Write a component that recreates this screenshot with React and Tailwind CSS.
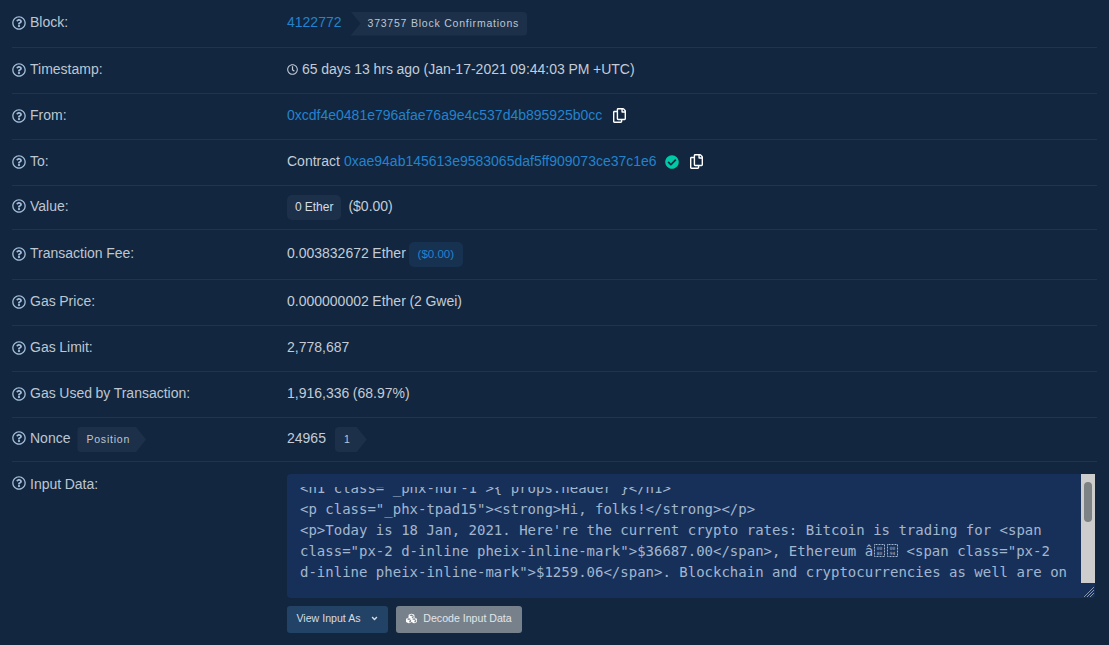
import { FaRegQuestionCircle, FaRegClock, FaRegCopy, FaCheckCircle, FaCubes, FaAngleDown } from 'react-icons/fa';

function Row({ label, extra, className, children }) {
  return (
    <div className={`flex border-b border-[#1c3557] ${className}`}>
      <div className="w-[275px] shrink-0 flex items-center text-[#bcc7d3]">
        <FaRegQuestionCircle className="w-[14px] h-[14px] mr-[4px] text-[#a3bdd8]" />
        <span>{label}</span>
        {extra}
      </div>
      <div className="flex items-center text-[#c3ccd7]">{children}</div>
    </div>
  );
}

function Copy() {
  return <FaRegCopy className="w-[13px] h-[15px] text-white" />;
}

// the two control characters show up as missing-glyph boxes in the reference
function Tofu({ top, bottom }) {
  return (
    <svg className="inline-block w-[12.5px] h-[15px] align-[-2px]" viewBox="0 0 25 30">
      <rect x="3" y="3" width="20" height="24" fill="none" stroke="#a2b7cf" strokeWidth="2" strokeDasharray="2 1" />
      <text x="13" y="13" textAnchor="middle" fontSize="9" fill="#a2b7cf" fontFamily="DejaVu Sans Mono">{top}</text>
      <text x="13" y="24" textAnchor="middle" fontSize="9" fill="#a2b7cf" fontFamily="DejaVu Sans Mono">{bottom}</text>
    </svg>
  );
}

export default function App() {
  return (
    <div className="h-[645px] overflow-hidden bg-[#12263f] px-[12px] text-[14px] leading-[21px] [word-spacing:-0.3px]" style={{ fontFamily: '"Liberation Sans", Arial, sans-serif' }}>
      <Row label="Block:" className="h-[48px] pb-[2px]">
        <a className="text-[#2383cd]">4122772</a>
        <span className="ml-[9px] mt-[2px] h-[24px] flex items-center pl-[17px] pr-[8px] bg-[#1c3049] rounded-r-[4px] text-[10.5px] tracking-[0.78px] [word-spacing:normal] text-[#bcc7d3] [clip-path:polygon(0_0,100%_0,100%_100%,0_100%,10px_50%)]">373757 Block Confirmations</span>
      </Row>
      <Row label="Timestamp:" className="h-[46px] pb-[2px]">
        <FaRegClock className="w-[11px] h-[11px] mr-[4px]" />
        65 days 13 hrs ago (Jan-17-2021 09:44:03 PM +UTC)
      </Row>
      <Row label="From:" className="h-[46px] pb-[2px]">
        <a className="text-[#2383cd] mr-[11px]">0xcdf4e0481e796afae76a9e4c537d4b895925b0cc</a>
        <Copy />
      </Row>
      <Row label="To:" className="h-[46px] pb-[2px]">
        <span className="mr-[4px]">Contract</span>
        <a className="text-[#2383cd] mr-[8px]">0xae94ab145613e9583065daf5ff909073ce37c1e6</a>
        <FaCheckCircle className="w-[14px] h-[14px] text-[#00c9a7] mr-[11px]" />
        <Copy />
      </Row>
      <Row label="Value:" className="h-[44px] pb-[3px]">
        <span className="mt-[3px] h-[25px] flex items-center px-[8px] mr-[7px] rounded-[5px] bg-[#1c3049] text-[12px] text-[#d5dce4]">0 Ether</span>
        ($0.00)
      </Row>
      <Row label="Transaction Fee:" className="h-[50px] pb-[2px]">
        0.003832672 Ether
        <span className="ml-[3px] mt-[2px] h-[25px] w-[54px] flex items-center justify-center rounded-[5px] bg-[#173250] text-[11.5px] text-[#2383cd]">($0.00)</span>
      </Row>
      <Row label="Gas Price:" className="h-[46px] pb-[2px]">0.000000002 Ether (2 Gwei)</Row>
      <Row label="Gas Limit:" className="h-[46px] pb-[2px]">2,778,687</Row>
      <Row label="Gas Used by Transaction:" className="h-[46px] pb-[2px]">1,916,336 (68.97%)</Row>
      <Row
        label="Nonce"
        className="h-[44px] pb-[3px]"
        extra={<span className="ml-[7px] mt-[3px] h-[25px] flex items-center pl-[9px] pr-[16px] bg-[#1c3049] text-[10.5px] tracking-[0.78px] text-[#bcc7d3] rounded-l-[4px] [clip-path:polygon(0_0,calc(100%-10px)_0,100%_50%,calc(100%-10px)_100%,0_100%)]">Position</span>}
      >
        24965
        <span className="ml-[9px] mt-[3px] h-[25px] flex items-center pl-[9px] pr-[17px] bg-[#1c3049] text-[10.5px] text-[#bcc7d3] rounded-l-[4px] [clip-path:polygon(0_0,calc(100%-10px)_0,100%_50%,calc(100%-10px)_100%,0_100%)]">1</span>
      </Row>
      <div className="flex pt-[12px]">
        <div className="w-[275px] shrink-0 flex items-start text-[#bcc7d3]">
          <FaRegQuestionCircle className="w-[14px] h-[14px] mr-[4px] mt-[2px] text-[#a3bdd8]" />
          Input Data:
        </div>
        <div className="flex-1 min-w-0">
          <div className="relative h-[124px] w-[808px] rounded-[4px] bg-[#17305a] px-[13px] pt-[13px] pb-[10px]">
            <div className="h-[101px] overflow-hidden">
              <div className="-mt-[9px] whitespace-pre text-[14px] leading-[21px] [word-spacing:normal] text-[#a2b7cf]" style={{ fontFamily: '"DejaVu Sans Mono", monospace' }}>
                {'<h1 class="_phx-hdr-1">{ props.header }</h1>\n'}
                {'<p class="_phx-tpad15"><strong>Hi, folks!</strong></p>\n'}
                {"<p>Today is 18 Jan, 2021. Here're the current crypto rates: Bitcoin is trading for <span\n"}
                {'class="px-2 d-inline pheix-inline-mark">$36687.00</span>, Ethereum \u00e2'}
                <Tofu top="00" bottom="80" />
                <Tofu top="00" bottom="94" />
                {' <span class="px-2\n'}
                {'d-inline pheix-inline-mark">$1259.06</span>. Blockchain and cryptocurrencies as well are on'}
              </div>
            </div>
            <div className="absolute right-0 top-0 w-[14px] h-[109px] bg-[#cdcdcd] flex justify-center pt-[8px]">
              <div className="w-[8px] h-[40px] rounded-full bg-[#7d8285]" />
            </div>
            <svg className="absolute right-0 bottom-0 w-[13px] h-[13px]" viewBox="0 0 13 13">
              <path d="M12 2 2 12M12 5 5 12M12 8 8 12" stroke="#8b97a6" strokeWidth="1" fill="none" />
            </svg>
          </div>
          <div className="flex mt-[8px] gap-[8px]">
            <button className="h-[27px] w-[101px] pb-[2px] flex items-center justify-center rounded-[3px] bg-[#224366] text-[10.6px] text-[#d5dce4]">
              View Input As <FaAngleDown className="ml-[9px] w-[9px] h-[9px]" />
            </button>
            <button className="h-[27px] w-[126px] pb-[2px] flex items-center justify-center rounded-[3px] bg-[#77818c] text-[10.6px] text-[#e2e6ea]">
              <FaCubes className="mr-[6px] w-[11px] h-[11px] text-white" /> Decode Input Data
            </button>
          </div>
        </div>
      </div>
    </div>
  );
}
